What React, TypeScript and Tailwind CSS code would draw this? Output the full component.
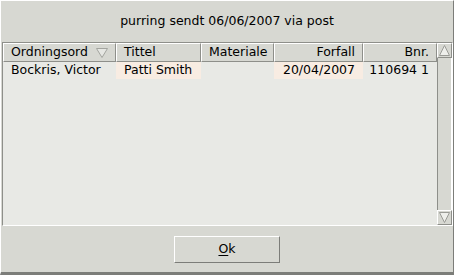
const font = { fontFamily: '"DejaVu Sans", sans-serif' };

function SortArrow() {
  return (
    <svg width="12" height="10" viewBox="0 0 12 10" className="ml-auto shrink-0">
      <path d="M0.5 0.5 H11.5 L6 9.5 Z" fill="#e6e7e3" stroke="#a3a49f" />
    </svg>
  );
}

function ArrowButton({ up }: { up?: boolean }) {
  return (
    <div className="h-[15px] w-[15px] border-t border-l border-t-white border-l-white border-b border-r border-b-[#8e8f8a] border-r-[#8e8f8a] bg-[#d7d8d2] flex items-center justify-center">
      <svg width="11" height="11" viewBox="0 0 11 11">
        {up ? (
          <path d="M0.5 10.5 L5.5 0.5 L10.5 10.5 Z" fill="#eeefeb" stroke="#9a9b96" />
        ) : (
          <path d="M0.5 0.5 L5.5 10.5 L10.5 0.5 Z" fill="#eeefeb" stroke="#9a9b96" />
        )}
      </svg>
    </div>
  );
}

const cols = [
  { label: 'Ordningsord', w: 'w-[113px]', right: false, sort: true },
  { label: 'Tittel', w: 'w-[85px]', right: false },
  { label: 'Materiale', w: 'w-[73px]', right: false },
  { label: 'Forfall', w: 'w-[89px]', right: true },
  { label: 'Bnr.', w: 'w-[74px]', right: true },
];

export default function App() {
  return (
    <div
      className="w-[454px] h-[275px] bg-[#d7d8d2] flex flex-col border-l border-t border-l-white border-t-white border-r border-r-[#7c7d79] border-b-[3px] border-b-[#7c7d79] text-[12.5px] text-black whitespace-nowrap"
      style={font}
    >
      <div className="h-[41px] flex items-center justify-center pb-[1px]">
        purring sendt 06/06/2007 via post
      </div>
      <div className="ml-[1px] h-[184px] flex border-t border-l border-t-[#8e8f8a] border-l-[#8e8f8a] border-b border-r border-b-white border-r-white bg-[#e8e9e5]">
        <div className="flex-1 min-w-0 flex flex-col">
          <div className="flex h-[19px]">
            {cols.map((c) => (
              <div
                key={c.label}
                className={`${c.w} shrink-0 overflow-hidden flex items-center px-[7px] border-t border-l border-t-white border-l-white border-b border-r border-b-[#8e8f8a] border-r-[#8e8f8a] bg-[#d7d8d2] ${c.right ? 'justify-end' : ''}`}
              >
                <span>{c.label}</span>
                {c.sort && <SortArrow />}
              </div>
            ))}
          </div>
          <div className="flex h-[17px] items-stretch">
            <div className="w-[113px] shrink-0 px-[8px] flex items-center">Bockris, Victor</div>
            <div className="w-[85px] shrink-0 px-[8px] bg-[#f8ece2] flex items-center">Patti Smith</div>
            <div className="w-[73px] shrink-0"></div>
            <div className="w-[89px] shrink-0 px-[8px] bg-[#f8ece2] flex items-center justify-end">20/04/2007</div>
            <div className="w-[74px] shrink-0 px-[8px] flex items-center justify-end">110694 1</div>
          </div>
        </div>
        <div className="w-[15px] shrink-0 flex flex-col bg-[#d7d8d2]">
          <ArrowButton up />
          <div className="flex-1 border-l border-l-[#8e8f8a] border-r border-r-white" />
          <ArrowButton />
        </div>
      </div>
      <div className="flex-1 flex items-center justify-center pt-[1px]">
        <button className="w-[106px] h-[27px] border-t border-l border-t-white border-l-white border-b border-r border-b-[#7c7d79] border-r-[#7c7d79] bg-[#d7d8d2]">
          <span className="underline underline-offset-2">O</span>k
        </button>
      </div>
    </div>
  );
}
